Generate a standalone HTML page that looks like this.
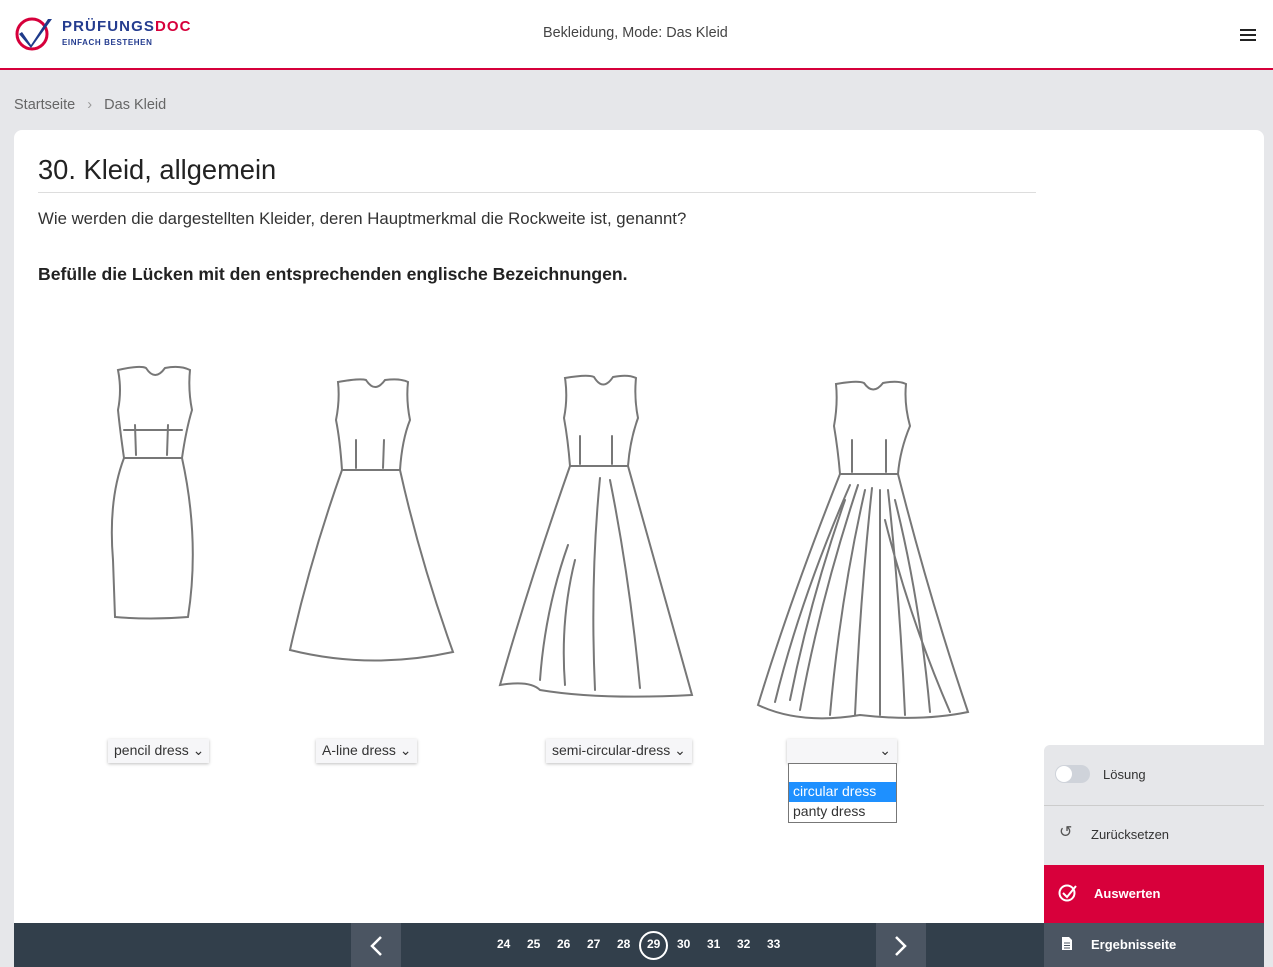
<!DOCTYPE html>
<html><head><meta charset="utf-8"><style>
*{box-sizing:border-box;margin:0;padding:0}
html,body{width:1273px;height:967px;overflow:hidden}
body{background:#e6e7ea;font-family:"Liberation Sans",sans-serif;position:relative;color:#222}
.hdr{position:absolute;left:0;top:0;width:1273px;height:70px;background:#fff;border-bottom:2px solid #d6003b}
.card{position:absolute;left:14px;top:130px;width:1250px;height:837px;background:#fff;border-radius:8px 8px 0 0}
.abs{position:absolute}
.sel{position:absolute;top:739px;height:24px;background:#f6f6f8;box-shadow:0 1px 3px rgba(0,0,0,.25);font-size:14px;color:#333;padding:3px 6px;white-space:nowrap}
.foot{position:absolute;left:14px;top:923px;width:1030px;height:44px;background:#323f4b}
.pg{position:absolute;top:937px;color:#fff;font-size:12px;font-weight:bold}
svg.d path{fill:none;stroke:#777;stroke-width:2;stroke-linecap:round}
</style></head><body>
<div class="hdr">
<svg class="abs" style="left:14px;top:15px" width="40" height="36" viewBox="0 0 40 36"><circle cx="18" cy="19" r="15" fill="none" stroke="#d6003b" stroke-width="3"/><path d="M8 17 L17 30 L34 4 L38 4 L17 33 L5 19Z" fill="#1e3a8a"/></svg>
<div class="abs" style="left:62px;top:18px;font-size:15px;font-weight:bold;color:#243c8f;letter-spacing:1.1px">PRÜFUNGS<span style="color:#d6003b">DOC</span></div>
<div class="abs" style="left:62px;top:38px;font-size:8px;font-weight:bold;color:#243c8f;letter-spacing:.6px">EINFACH BESTEHEN</div>
<div class="abs" style="left:543px;top:25px;font-size:14.4px;color:#444">Bekleidung, Mode: Das Kleid</div>
<div class="abs" style="left:1240px;top:29px;width:16px;height:2px;background:#222;box-shadow:0 5px 0 #222,0 10px 0 #222"></div>
</div>
<div class="abs" style="left:14px;top:97px;font-size:14.5px;color:#666">Startseite <span style="margin:0 8px;color:#999">›</span> Das Kleid</div>
<div class="card"></div>
<div class="abs" style="left:38px;top:154px;font-size:27.3px;color:#222">30. Kleid, allgemein</div>
<div class="abs" style="left:38px;top:192px;width:998px;height:1px;background:#ddd"></div>
<div class="abs" style="left:38px;top:209px;font-size:16.8px;color:#333">Wie werden die dargestellten Kleider, deren Hauptmerkmal die Rockweite ist, genannt?</div>
<div class="abs" style="left:38px;top:264px;font-size:17.6px;font-weight:bold;color:#222">Befülle die Lücken mit den entsprechenden englische Bezeichnungen.</div>
<svg class="abs d" style="left:0;top:0" width="1040" height="730">
<path d="M118 370 Q140 365 146 368 Q155 382 165 368 Q180 365 190 370 Q188 390 192 410 Q186 430 182 458 L124 458 Q120 430 118 410 Q122 390 118 370Z"/>
<path d="M124 458 Q108 500 113 560 L115 617 Q150 620 188 617 Q200 540 182 458"/>
<path d="M135 425 L136 455 M168 425 L167 455 M124 430 L182 430"/>
<path d="M338 382 Q360 378 366 380 Q375 394 385 380 Q400 378 408 382 Q406 400 410 420 Q402 440 400 470 L342 470 Q340 440 336 420 Q340 400 338 382Z"/>
<path d="M342 470 Q310 560 290 650 Q370 670 453 652 Q420 560 400 470"/>
<path d="M356 440 L356 468 M384 440 L383 468"/>
<path d="M565 378 Q588 374 594 377 Q603 392 613 377 Q628 374 636 378 Q634 398 638 418 Q630 440 628 466 L570 466 Q568 440 564 418 Q568 398 565 378Z"/>
<path d="M570 466 Q530 580 500 685 Q530 680 540 690 Q600 700 692 695 Q660 580 628 466"/>
<path d="M580 436 L580 464 M612 436 L612 464 M568 545 Q545 610 540 680 M600 478 Q590 580 595 690 M610 480 Q630 580 640 688 M575 560 Q560 620 565 685"/>
<path d="M836 384 Q858 380 864 383 Q873 396 883 383 Q898 380 906 384 Q904 404 910 426 Q900 450 898 474 L840 474 Q838 450 834 426 Q838 404 836 384Z"/>
<path d="M840 474 Q790 600 758 705 Q800 725 860 715 Q920 722 968 712 Q930 600 898 474"/>
<path d="M852 440 L852 472 M886 440 L886 472 M850 485 Q800 600 775 702 M858 485 Q820 600 800 710 M865 490 Q840 600 830 715 M872 488 Q860 600 855 715 M880 490 Q880 600 880 715 M888 490 Q900 600 905 715 M895 500 Q920 600 930 712 M885 520 Q910 620 950 712 M845 500 Q810 600 790 700"/>
</svg>
<div class="sel" style="left:108px;width:101px">pencil dress ⌄</div>
<div class="sel" style="left:316px;width:101px">A-line dress ⌄</div>
<div class="sel" style="left:546px;width:146px">semi-circular-dress ⌄</div>
<div class="sel" style="left:787px;width:110px;text-align:right">⌄</div>
<div class="abs" style="left:788px;top:763px;width:109px;height:60px;background:#fff;border:1px solid #777;font-size:14px">
<div style="position:absolute;top:18px;left:0;width:107px;height:20px;background:#1e90ff;color:#fff;padding:1px 4px">circular dress</div>
<div style="position:absolute;top:38px;left:0;padding:1px 4px;color:#333">panty dress</div></div>
<div class="foot"></div>
<div class="abs" style="left:351px;top:923px;width:50px;height:44px;background:#4b5562"></div>
<svg class="abs" style="left:368px;top:935px" width="16" height="22"><path d="M13 2 L4 11 L13 20" fill="none" stroke="#fff" stroke-width="2.5"/></svg>
<div class="abs" style="left:876px;top:923px;width:50px;height:44px;background:#4b5562"></div>
<svg class="abs" style="left:893px;top:935px" width="16" height="22"><path d="M3 2 L12 11 L3 20" fill="none" stroke="#fff" stroke-width="2.5"/></svg>
<div class="pg" style="left:497px">24</div><div class="pg" style="left:527px">25</div><div class="pg" style="left:557px">26</div><div class="pg" style="left:587px">27</div><div class="pg" style="left:617px">28</div>
<div class="abs" style="left:639px;top:931px;width:29px;height:29px;border:2px solid #fff;border-radius:50%"></div><div class="pg" style="left:647px">29</div>
<div class="pg" style="left:677px">30</div><div class="pg" style="left:707px">31</div><div class="pg" style="left:737px">32</div><div class="pg" style="left:767px">33</div>
<div class="abs" style="left:1044px;top:745px;width:220px;height:120px;background:#e6e7ea;border-radius:6px 0 0 0"></div>
<div class="abs" style="left:1044px;top:805px;width:220px;height:1px;background:#ccc"></div>
<div class="abs" style="left:1055px;top:765px;width:35px;height:18px;border-radius:9px;background:#cfd3da"></div>
<div class="abs" style="left:1056px;top:766px;width:16px;height:16px;border-radius:50%;background:#fff"></div>
<div class="abs" style="left:1103px;top:767px;font-size:13px;color:#333">Lösung</div>
<div class="abs" style="left:1059px;top:822px;font-size:16px;color:#555">↺</div>
<div class="abs" style="left:1091px;top:827px;font-size:13px;color:#333">Zurücksetzen</div>
<div class="abs" style="left:1044px;top:865px;width:220px;height:58px;background:#d8003b"></div>
<svg class="abs" style="left:1058px;top:883px" width="20" height="20"><circle cx="9" cy="10" r="7.5" fill="none" stroke="#fff" stroke-width="2"/><path d="M5 10 L9 14 L18 3" fill="none" stroke="#fff" stroke-width="2"/></svg>
<div class="abs" style="left:1094px;top:886px;font-size:13px;font-weight:bold;color:#fff">Auswerten</div>
<div class="abs" style="left:1044px;top:923px;width:220px;height:44px;background:#4b5562"></div>
<svg class="abs" style="left:1061px;top:936px" width="12" height="15"><path d="M1 1 H8 L11 4 V14 H1Z" fill="#fff"/><path d="M3 7H9M3 9.5H9M3 12H9" stroke="#4b5562"/></svg>
<div class="abs" style="left:1091px;top:937px;font-size:13px;font-weight:bold;color:#fff">Ergebnisseite</div>
</body></html>
